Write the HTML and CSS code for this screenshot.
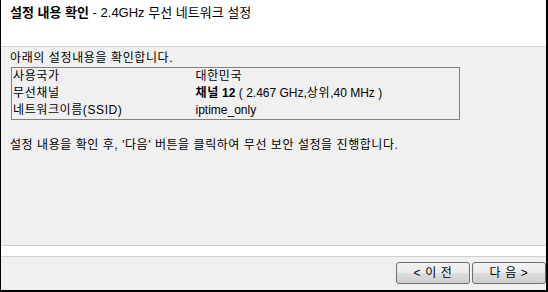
FILE: index.html
```html
<!DOCTYPE html>
<html lang="ko">
<head>
<meta charset="utf-8">
<link rel="stylesheet" href="styles.css">
</head>
<body>
<div class="frame">
  <div class="header">
    <span class="title-strong">설정 내용 확인</span> - 2.4GHz 무선 네트워크 설정
  </div>
  <div class="content">
    <p class="intro">아래의 설정내용을 확인합니다.</p>
    <table class="summary">
      <tr><td class="label">사용국가</td><td class="ko">대한민국</td></tr>
      <tr><td class="label">무선채널</td><td><b class="ko">채널</b><b> 12</b> ( 2.467 GHz,<span class="ko">상위</span>,40 MHz )</td></tr>
      <tr><td class="label">네트워크이름(SSID)</td><td>iptime_only</td></tr>
    </table>
    <p class="note">설정 내용을 확인 후, '다음' 버튼을 클릭하여 무선 보안 설정을 진행합니다.</p>
  </div>
  <div class="band"></div>
  <div class="footer">
    <button class="btn">&lt; 이 전</button>
    <button class="btn">다 음 &gt;</button>
  </div>
</div>
</body>
</html>
```
FILE: styles.css
```css
* { box-sizing: border-box; }
html, body { margin: 0; padding: 0; background: #ffffff; }
body {
  font-family: "Liberation Sans", "Noto Sans CJK KR", sans-serif;
  font-size: 12px;
  color: #000;
}
.frame {
  width: 548px;
  height: 292px;
  border-left: 1px solid #000;
  border-right: 2px solid #000;
  border-bottom: 2px solid #000;
  background: #f0f0f0;
  display: flex;
  flex-direction: column;
}
.header {
  height: 47px;
  background: #fff;
  border-bottom: 1px solid #d5d5d5;
  padding: 5px 0 0 9px;
  font-size: 13px;
  line-height: 16px;
}
.title-strong { font-weight: bold; }
.content {
  flex: 1;
  padding: 3px 0 0 9px;
}
.intro { margin: 0; line-height: 16px; letter-spacing: 0.6px; }
.ko { letter-spacing: 0.6px; }
.summary {
  margin: 1px 0 0 1px;
  width: 449px;
  border: 1px solid #808080;
  border-collapse: collapse;
  border-spacing: 0;
}
.summary td {
  padding: 0 0 0 1px;
  height: 17px;
  line-height: 17px;
  vertical-align: middle;
}
.summary td.label { width: 183px; letter-spacing: 0.6px; }
.note { margin: 17px 0 0 0; line-height: 16px; letter-spacing: 0.55px; }
.band {
  height: 12px;
  background: #fff;
  border-top: 1px solid #d0d0d0;
  border-bottom: 1px solid #d0d0d0;
}
.footer {
  height: 33px;
  display: flex;
  justify-content: flex-end;
  align-items: flex-start;
  gap: 2px;
  padding: 5px 0 0 0;
}
.btn {
  width: 74px;
  height: 22px;
  border: 1px solid #707070;
  border-radius: 3px;
  background: linear-gradient(#f2f2f2 0%, #ebebeb 50%, #dddddd 51%, #cfcfcf 100%);
  font-family: "Liberation Sans", "Noto Sans CJK KR", sans-serif;
  font-size: 12px;
  color: #000;
  padding: 0;
  line-height: 18px;
  letter-spacing: 0.6px;
}
```
